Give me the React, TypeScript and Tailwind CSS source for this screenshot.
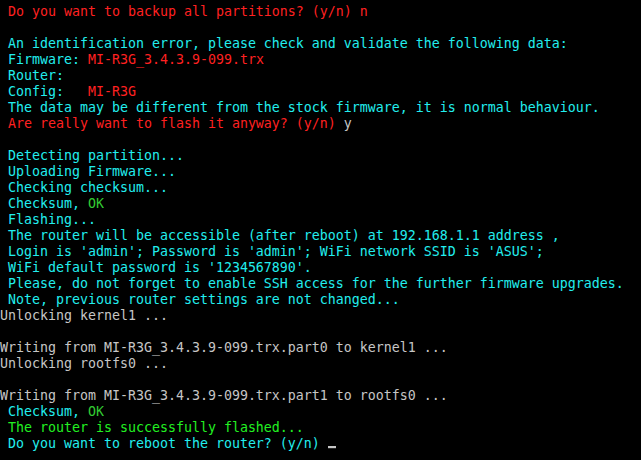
type Seg = { t: string; c?: string };

const RED = "text-[#ff2121]";
const CYAN = "text-[#22eeee]";
const GREY = "text-[#c6c6c6]";
const GREEN = "text-[#22f022]";
const OK = "text-[#33cc33]";

const fw = "MI-R3G_3.4.3.9-099.trx";

const lines: Seg[][] = [
  [{ t: " Do you want to backup all partitions? (y/n) n", c: RED }],
  [],
  [{ t: " An identification error, please check and validate the following data:", c: CYAN }],
  [{ t: " Firmware: ", c: CYAN }, { t: fw, c: RED }],
  [{ t: " Router:", c: CYAN }],
  [{ t: " Config:   ", c: CYAN }, { t: "MI-R3G", c: RED }],
  [{ t: " The data may be different from the stock firmware, it is normal behaviour.", c: CYAN }],
  [{ t: " Are really want to flash it anyway? (y/n) ", c: RED }, { t: "y", c: GREY }],
  [],
  [{ t: " Detecting partition...", c: CYAN }],
  [{ t: " Uploading Firmware...", c: CYAN }],
  [{ t: " Checking checksum...", c: CYAN }],
  [{ t: " Checksum, ", c: CYAN }, { t: "OK", c: OK }],
  [{ t: " Flashing...", c: CYAN }],
  [{ t: " The router will be accessible (after reboot) at 192.168.1.1 address ,", c: CYAN }],
  [{ t: " Login is 'admin'; Password is 'admin'; WiFi network SSID is 'ASUS';", c: CYAN }],
  [{ t: " WiFi default password is '1234567890'.", c: CYAN }],
  [{ t: " Please, do not forget to enable SSH access for the further firmware upgrades.", c: CYAN }],
  [{ t: " Note, previous router settings are not changed...", c: CYAN }],
  [{ t: "Unlocking kernel1 ...", c: GREY }],
  [],
  [{ t: `Writing from ${fw}.part0 to kernel1 ...`, c: GREY }],
  [{ t: "Unlocking rootfs0 ...", c: GREY }],
  [],
  [{ t: `Writing from ${fw}.part1 to rootfs0 ...`, c: GREY }],
  [{ t: " Checksum, ", c: CYAN }, { t: "OK", c: OK }],
  [{ t: " The router is successfully flashed...", c: GREEN }],
  [{ t: " Do you want to reboot the router? (y/n) ", c: CYAN }],
];

export default function App() {
  return (
    <div className="w-[641px] h-[460px] overflow-hidden bg-black pt-[3px] font-['DejaVu_Sans_Mono','Liberation_Mono',monospace] text-[13.29px] leading-4 whitespace-pre">
      {lines.map((segs, i) => (
        <div key={i} className="h-4 origin-top scale-y-110">
          {segs.map((s, j) => (
            <span key={j} className={s.c}>
              {s.t}
            </span>
          ))}
          {i === lines.length - 1 && (
            <span className="inline-block w-2 h-[2px] bg-[#c6c6c6] align-baseline" />
          )}
        </div>
      ))}
    </div>
  );
}
